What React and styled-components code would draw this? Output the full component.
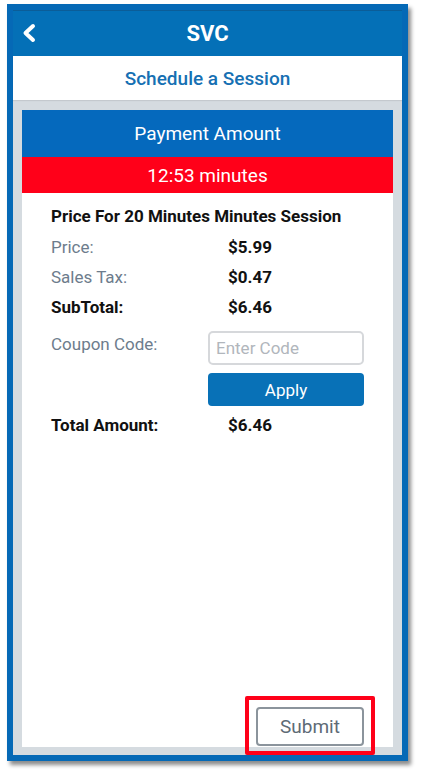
import React from 'react';
import styled, { createGlobalStyle } from 'styled-components';

const GlobalStyle = createGlobalStyle`
  html, body {
    margin: 0;
    padding: 0;
    background: #ffffff;
    font-family: Roboto, "Liberation Sans", Arial, sans-serif;
  }
`;

const Page = styled.div`
  padding: 4px 0 0 7px;
  width: 422px;
  height: 773px;
  box-sizing: border-box;
`;

const Frame = styled.div`
  width: 401px;
  height: 757px;
  box-sizing: border-box;
  border: 6px solid #0569b6;
  box-shadow: 3px 4px 4px rgba(0, 0, 0, 0.45);
  display: flex;
  flex-direction: column;
  background: #d5dbe0;
`;

const TopBar = styled.header`
  height: 46px;
  background: #0470b7;
  border-top: 1px solid #0b5d98;
  box-sizing: border-box;
  display: flex;
  align-items: center;
  justify-content: center;
  position: relative;
  color: #fff;
  font-size: 22px;
  font-weight: 700;
`;

const BackButton = styled.button`
  position: absolute;
  left: 8px;
  top: 12px;
  background: none;
  border: none;
  padding: 0;
  display: flex;
`;

const SubBar = styled.div`
  height: 44px;
  background: #fff;
  display: flex;
  align-items: center;
  justify-content: center;
  color: #1670b3;
  font-size: 19px;
  font-weight: 500;
  box-shadow: 0 1px 1px rgba(0, 0, 0, 0.08);
`;

const Body = styled.div`
  flex: 1;
  padding: 10px 9px 8px;
  display: flex;
`;

const Panel = styled.section`
  flex: 1;
  background: #fff;
  display: flex;
  flex-direction: column;
`;

const Banner = styled.div`
  height: ${(p) => p.$h}px;
  background: ${(p) => p.$bg};
  color: #fff;
  display: flex;
  align-items: center;
  justify-content: center;
  font-size: 19px;
`;

const Content = styled.div`
  flex: 1;
  padding: 13px 29px 0;
  display: flex;
  flex-direction: column;
`;

const Heading = styled.div`
  font-size: 17px;
  line-height: 20px;
  font-weight: 700;
  color: #111;
  margin-bottom: 11px;
`;

const Row = styled.div`
  display: grid;
  grid-template-columns: 177px 1fr;
  align-items: start;
  height: ${(p) => p.$h || 30}px;
  font-size: 17px;
  line-height: 20px;
`;

const Label = styled.span`
  color: ${(p) => (p.$dark ? '#111' : '#6d7c8c')};
  font-weight: ${(p) => (p.$dark ? 700 : 400)};
`;

const Value = styled.span`
  color: #111;
  font-weight: 700;
`;

const CouponBox = styled.div`
  display: flex;
  flex-direction: column;
  gap: 8px;
  margin-left: -20px;
  margin-top: -3px;
`;

const CodeInput = styled.input`
  width: 156px;
  height: 34px;
  box-sizing: border-box;
  border: 2px solid #d6d8db;
  border-radius: 5px;
  padding: 0 6px;
  font-family: inherit;
  font-size: 17px;
  outline: none;
  &::placeholder {
    color: #b1b6bc;
  }
`;

const ApplyButton = styled.button`
  width: 156px;
  height: 33px;
  border: none;
  border-radius: 4px;
  background: #0871b7;
  color: #fff;
  font-family: inherit;
  font-size: 17px;
`;

const Footer = styled.div`
  display: flex;
  justify-content: flex-end;
  padding: 0 18px 0 0;
`;

const Highlight = styled.div`
  border: 4px solid #ff0019;
  border-radius: 2px;
  padding: 7px 7px 5px 7px;
  margin-bottom: -8px;
  position: relative;
  z-index: 1;
`;

const SubmitButton = styled.button`
  width: 108px;
  height: 39px;
  background: #fff;
  border: 2px solid #8b949c;
  border-radius: 4px;
  color: #5e6b76;
  font-family: inherit;
  font-size: 19px;
`;

const App = () => (
  <>
    <GlobalStyle />
    <Page>
      <Frame>
        <TopBar>
          <BackButton type="button">
            <svg width="16" height="20" viewBox="0 0 16 20">
              <polyline points="12,3 4.5,10 12,17" fill="none" stroke="#fff" strokeWidth="4" strokeLinecap="round" strokeLinejoin="round" />
            </svg>
          </BackButton>
          SVC
        </TopBar>
        <SubBar>Schedule a Session</SubBar>
        <Body>
          <Panel>
            <Banner $h={47} $bg="#0569bd">Payment Amount</Banner>
            <Banner $h={36} $bg="#ff0019">12:53 minutes</Banner>
            <Content>
              <Heading>Price For 20 Minutes Minutes Session</Heading>
              <Row>
                <Label>Price:</Label>
                <Value>$5.99</Value>
              </Row>
              <Row>
                <Label>Sales Tax:</Label>
                <Value>$0.47</Value>
              </Row>
              <Row $h={37}>
                <Label $dark>SubTotal:</Label>
                <Value>$6.46</Value>
              </Row>
              <Row $h={81}>
                <Label>Coupon Code:</Label>
                <CouponBox>
                  <CodeInput placeholder="Enter Code" />
                  <ApplyButton type="button">Apply</ApplyButton>
                </CouponBox>
              </Row>
              <Row>
                <Label $dark>Total Amount:</Label>
                <Value>$6.46</Value>
              </Row>
            </Content>
            <Footer>
              <Highlight>
                <SubmitButton type="button">Submit</SubmitButton>
              </Highlight>
            </Footer>
          </Panel>
        </Body>
      </Frame>
    </Page>
  </>
);

export default App;
